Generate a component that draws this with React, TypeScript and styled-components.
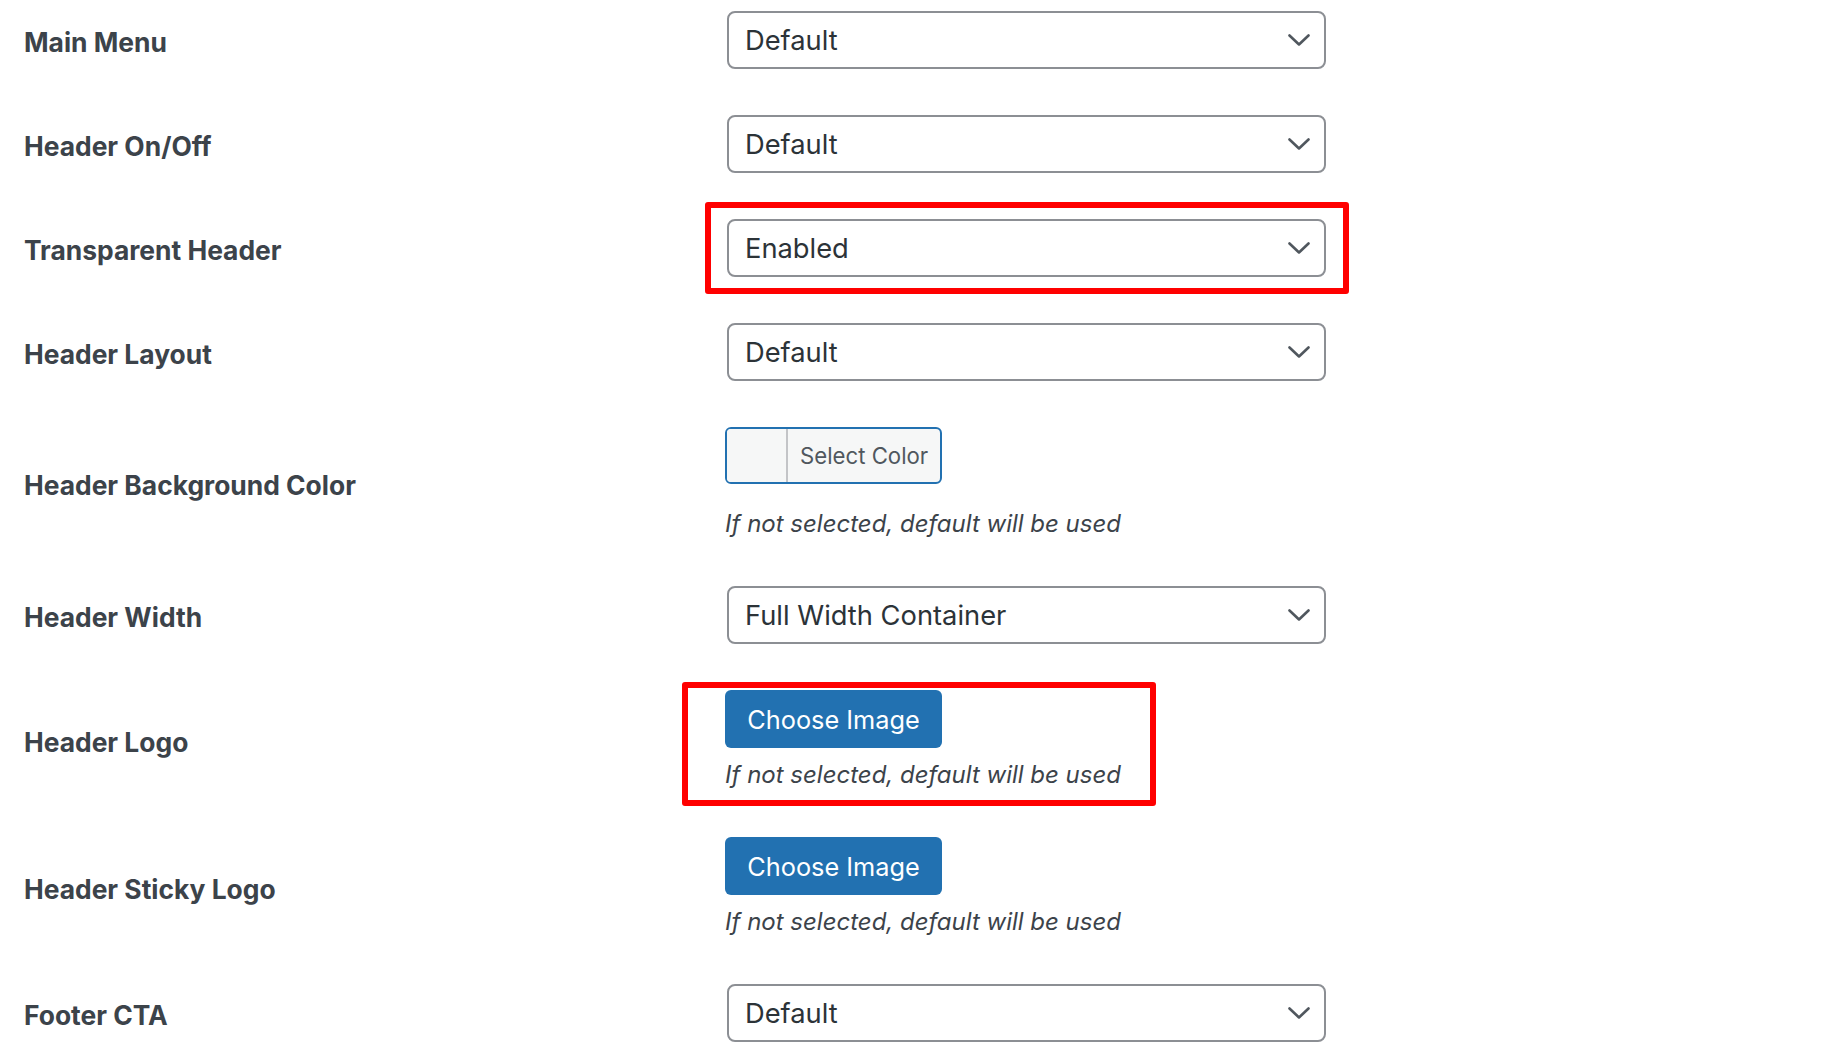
import React from "react";
import styled, { createGlobalStyle } from "styled-components";

const Global = createGlobalStyle`
  html, body { margin: 0; padding: 0; background: #ffffff; }
  body { font-family: Inter, "Noto Sans", "Liberation Sans", sans-serif; -webkit-font-smoothing: antialiased; }
  * { box-sizing: border-box; }
`;

const Page = styled.div`
  padding: 0 0 0 24px;
  width: 1834px;
`;

const Row = styled.div`
  display: grid;
  grid-template-columns: 701px 1fr;
  align-items: center;
  padding: 23px 0;
  &:first-child { padding-top: 11px; }
`;

const Label = styled.div`
  font-family: Inter, "Noto Sans", sans-serif;
  font-weight: 700;
  font-size: 26.4px;
  padding-top: 3px;
  color: #3c434a;
  letter-spacing: 0;
`;

const Field = styled.div`
  display: flex;
  flex-direction: column;
  align-items: flex-start;
`;

const Annotated = styled.div`
  position: relative;
  display: inline-flex;
  flex-direction: column;
  align-items: flex-start;
`;

const Mark = styled.span<{ $t: number; $r: number; $b: number; $l: number }>`
  position: absolute;
  top: ${(p) => p.$t}px;
  right: ${(p) => p.$r}px;
  bottom: ${(p) => p.$b}px;
  left: ${(p) => p.$l}px;
  border: 6px solid #ff0000;
  border-radius: 3px;
  pointer-events: none;
`;

const SelectBox = styled.div`
  margin-left: 2px;
  width: 599px;
  height: 58px;
  border: 2px solid #8c8f94;
  border-radius: 8px;
  background: #ffffff;
  display: flex;
  align-items: center;
  justify-content: space-between;
  padding: 0 14px 0 16px;
  font-size: 27.3px;
  color: #2c3338;
`;

const Chevron = styled.svg`
  width: 22px;
  height: 12px;
  flex: none;
`;

const ColorButton = styled.div`
  display: flex;
  width: 217px;
  height: 57px;
  border: 2px solid #2271b1;
  border-radius: 6px;
  background: #f6f7f7;
  overflow: hidden;
`;

const Swatch = styled.span`
  width: 61px;
  border-right: 2px solid #c3c4c7;
  background: #f6f7f7;
`;

const ColorText = styled.span`
  display: flex;
  align-items: center;
  padding-left: 12px;
  font-size: 22.2px;
  color: #50575e;
`;

const PrimaryButton = styled.div`
  display: flex;
  align-items: center;
  justify-content: center;
  width: 217px;
  height: 58px;
  border-radius: 6px;
  background: #2271b1;
  color: #ffffff;
  font-size: 25.3px;
`;

const Description = styled.p<{ $gap: number }>`
  margin: ${(p) => p.$gap}px 0 0 0;
  font-style: italic;
  font-size: 24px;
  line-height: 32px;
  color: #3c434a;
`;

const Select = ({ value }: { value: string }) => (
  <SelectBox>
    <span>{value}</span>
    <Chevron viewBox="0 0 22 12">
      <polyline points="1.5,1.5 11,10.5 20.5,1.5" fill="none" stroke="#50575e" strokeWidth="2.6" strokeLinecap="round" strokeLinejoin="round" />
    </Chevron>
  </SelectBox>
);

const DESC = "If not selected, default will be used";

export default function App() {
  return (
    <>
      <Global />
      <Page>
        <Row>
          <Label>Main Menu</Label>
          <Field>
            <Select value="Default" />
          </Field>
        </Row>
        <Row>
          <Label>Header On/Off</Label>
          <Field>
            <Select value="Default" />
          </Field>
        </Row>
        <Row>
          <Label>Transparent Header</Label>
          <Field>
            <Annotated>
              <Select value="Enabled" />
              <Mark $t={-17} $r={-23} $b={-17} $l={-20} />
            </Annotated>
          </Field>
        </Row>
        <Row>
          <Label>Header Layout</Label>
          <Field>
            <Select value="Default" />
          </Field>
        </Row>
        <Row>
          <Label>Header Background Color</Label>
          <Field>
            <ColorButton>
              <Swatch />
              <ColorText>Select Color</ColorText>
            </ColorButton>
            <Description $gap={24}>{DESC}</Description>
          </Field>
        </Row>
        <Row>
          <Label>Header Width</Label>
          <Field>
            <Select value="Full Width Container" />
          </Field>
        </Row>
        <Row>
          <Label>Header Logo</Label>
          <Field>
            <Annotated>
              <PrimaryButton>Choose Image</PrimaryButton>
              <Description $gap={11}>{DESC}</Description>
              <Mark $t={-8} $r={-35} $b={-15} $l={-43} />
            </Annotated>
          </Field>
        </Row>
        <Row>
          <Label>Header Sticky Logo</Label>
          <Field>
            <PrimaryButton>Choose Image</PrimaryButton>
            <Description $gap={11}>{DESC}</Description>
          </Field>
        </Row>
        <Row>
          <Label>Footer CTA</Label>
          <Field>
            <Select value="Default" />
          </Field>
        </Row>
      </Page>
    </>
  );
}
